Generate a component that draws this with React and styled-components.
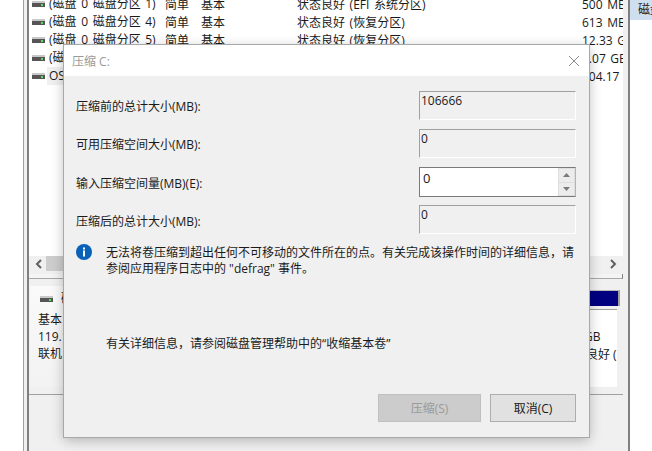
import React from 'react';
import styled, { createGlobalStyle } from 'styled-components';

const GlobalStyle = createGlobalStyle`
  html, body {
    margin: 0;
    height: 100%;
    overflow: hidden;
    background: #fff;
  }
  body {
    font-family: "Open Sans", "Noto Sans CJK SC", sans-serif;
    font-size: 12px;
    color: #1a1a1a;
  }
`;

const Desktop = styled.div`
  position: relative;
  width: 652px;
  height: 451px;
  display: flex;
  overflow: hidden;
  background: #fff;
`;

const Gutter = styled.div`
  width: 23px;
  flex: none;
`;

const Main = styled.div`
  width: 607px;
  flex: none;
  display: flex;
  flex-direction: column;
  box-sizing: border-box;
  background: #f0f0f0;
  border-left: 1px solid #a0a0a0;
  border-right: 2px solid #808080;
  padding-left: 3px;
`;

const Content = styled.div`
  flex: 1;
  display: flex;
  flex-direction: column;
  border-left: 2px solid #808080;
  min-height: 0;
`;

const List = styled.div`
  height: 256px;
  flex: none;
  background: #fff;
  overflow: hidden;
  margin-right: 5px;
`;

const Rows = styled.div`
  margin-top: -5px;
`;

const Row = styled.div`
  height: 18px;
  display: grid;
  grid-template-columns: 116px 36px 96px 285px auto;
  align-items: center;
  padding-left: 20px;
  position: relative;
  white-space: nowrap;
  overflow: hidden;
  word-spacing: 1.5px;
`;

const RowIcon = styled.svg`
  position: absolute;
  left: 3px;
  top: 6px;
`;

const NameCell = styled.span`
  justify-self: start;
  margin-left: -2px;
  padding-left: 2px;
  line-height: 18px;
  background: ${({ $selected }) => ($selected ? '#f0f0f0' : 'transparent')};
  width: ${({ $selected }) => ($selected ? '15px' : 'auto')};
`;

const HScroll = styled.div`
  height: 15px;
  flex: none;
  display: flex;
  align-items: stretch;
  background: #f0f0f0;
  margin-right: 5px;
`;

const ScrollArrow = styled.svg`
  flex: none;
  align-self: center;
  margin: 0 6px;
`;

const ScrollThumb = styled.div`
  width: 60px;
  margin-left: -3px;
  background: #cdcdcd;
`;

const ScrollTrack = styled.div`
  flex: 1;
`;

const Splitter = styled.div`
  height: 8px;
  flex: none;
  box-sizing: border-box;
  margin-right: 5px;
  padding-top: 3px;
  border-bottom: 1px solid #808080;
`;

const SplitterBar = styled.div`
  height: 4px;
  background: #f4f4f4;
  border-bottom: 1px solid #a8a8a8;
  border-right: 1px solid #808080;
`;

const DiskPane = styled.div`
  height: 116px;
  flex: none;
  box-sizing: border-box;
  padding: 7px 3px 7px 1px;
  display: flex;
  border-bottom: 1px solid #a0a0a0;
  margin-right: 5px;
`;

const DiskInfo = styled.div`
  width: 150px;
  flex: none;
  padding: 3px 0 0 8px;
  line-height: 17px;
  background: linear-gradient(#fafafa, #f2f2f2);
`;

const DiskName = styled.div`
  display: flex;
  align-items: center;
  gap: 8px;
  height: 19px;
  margin-bottom: 3px;
  padding-left: 2px;
`;

const DiskLine = styled.div`
  white-space: nowrap;
`;

const Partition = styled.div`
  flex: 1;
  min-width: 0;
  display: flex;
  flex-direction: column;
  padding-top: 4px;
`;

const PartitionHead = styled.div`
  height: 15px;
  flex: none;
  background: #000080;
  border-right: 2px solid #a0a0a0;
  border-top: 1px solid #b8b8b8;
`;

const PartitionBody = styled.div`
  flex: 1;
  min-height: 0;
  background: #fff;
  margin: 3px 3px 0 0;
  padding: 18px 0 0 398px;
  border-top: 1px solid #a0a0a0;
  line-height: 18px;
  white-space: nowrap;
  overflow: hidden;
`;

const PartitionSize = styled.div`
  margin-left: -2px;
`;

const SidePanel = styled.div`
  flex: 1;
  min-width: 0;
  background: #fff;
`;

const SideTab = styled.div`
  height: 20px;
  background: #cfdfef;
  padding-left: 8px;
  line-height: 20px;
  white-space: nowrap;
  overflow: hidden;
`;

const Dialog = styled.div`
  position: absolute;
  left: 64px;
  top: 45px;
  width: 525px;
  height: 392px;
  box-sizing: border-box;
  display: flex;
  flex-direction: column;
  background: #f0f0f0;
  box-shadow: 0 0 0 1px #a8a8a8, 0 3px 12px rgba(0, 0, 0, 0.28);
`;

const TitleBar = styled.div`
  height: 31px;
  flex: none;
  background: #fff;
  display: flex;
  align-items: center;
  justify-content: space-between;
  padding: 0 9px 0 8px;
  color: #9a9a9a;
`;

const DialogBody = styled.div`
  flex: 1;
  display: flex;
  flex-direction: column;
  padding: 15px 13px 15px 12px;
`;

const Fields = styled.div`
  display: grid;
  grid-template-columns: 343px 157px;
  row-gap: 9px;
`;

const Label = styled.div`
  height: 29px;
  line-height: ${({ $low }) => ($low ? '33px' : '31px')};
`;

const ReadOnlyBox = styled.div`
  height: 29px;
  box-sizing: border-box;
  border: 1px solid #a0a0a0;
  border-right-color: #fff;
  border-bottom-color: #fff;
  line-height: 16px;
  padding: 1px 0 0 1px;
`;

const SpinBox = styled.div`
  height: 30px;
  box-sizing: border-box;
  display: flex;
  margin-bottom: -1px;
  background: #fff;
  border: 1px solid #7a7a7a;
  border-right-color: #b4b4b4;
`;

const SpinValue = styled.div`
  flex: 1;
  padding: 1px 0 0 3px;
  font-size: 13px;
`;

const SpinButtons = styled.div`
  width: 17px;
  display: flex;
  flex-direction: column;
  gap: 1px;
  padding: 1px;
  box-sizing: border-box;
  background: #dedede;
`;

const SpinButton = styled.div`
  flex: 1;
  display: flex;
  align-items: center;
  justify-content: center;
  background: #ececec;
`;

const Message = styled.div`
  display: flex;
  gap: 14px;
  margin-top: 10px;
  line-height: 16px;
`;

const InfoIcon = styled.svg`
  flex: none;
`;

const MessageText = styled.div`
  padding-top: 1px;
`;

const HelpText = styled.div`
  margin: 59px 0 0 30px;
  line-height: 16px;
`;

const Actions = styled.div`
  margin-top: auto;
  display: flex;
  justify-content: flex-end;
  gap: 9px;
`;

const Button = styled.div`
  width: ${({ $wide }) => ($wide ? '103px' : '86px')};
  height: 28px;
  box-sizing: border-box;
  display: flex;
  align-items: center;
  justify-content: center;
  background: ${({ $disabled }) => ($disabled ? '#cccccc' : '#e1e1e1')};
  border: 1px solid ${({ $disabled }) => ($disabled ? '#bfbfbf' : '#adadad')};
  color: ${({ $disabled }) => ($disabled ? '#9a9a9a' : '#1a1a1a')};
`;

const DriveGlyph = () => (
  <>
    <rect x="0" y="0" width="13" height="2" fill="#c8c8c8" />
    <rect x="0" y="2" width="13" height="4" fill="#555" />
    <rect x="9" y="3" width="2" height="2" fill="#55e055" />
  </>
);

const rows = [
  ['(磁盘 0 磁盘分区 1)', '简单', '基本', '状态良好 (EFI 系统分区)', '500 MB'],
  ['(磁盘 0 磁盘分区 4)', '简单', '基本', '状态良好 (恢复分区)', '613 MB'],
  ['(磁盘 0 磁盘分区 5)', '简单', '基本', '状态良好 (恢复分区)', '12.33 GB'],
  ['(磁盘 0 磁盘分区 6)', '简单', '基本', '状态良好 (恢复分区)', '1.07 GB'],
  ['OS', '简单', '基本', '状态良好 (启动)', '104.17 GB'],
];

const fields = [
  { label: '压缩前的总计大小(MB):', value: '106666' },
  { label: '可用压缩空间大小(MB):', value: '0' },
  { label: '输入压缩空间量(MB)(E):', value: '0', editable: true, low: true },
  { label: '压缩后的总计大小(MB):', value: '0', low: true },
];

const App = () => (
  <Desktop>
    <GlobalStyle />
    <Gutter />
    <Main>
      <Content>
        <List>
          <Rows>
            {rows.map(([name, ...cells]) => (
              <Row key={name}>
                <RowIcon width="13" height="6" viewBox="0 0 13 6">
                  <DriveGlyph />
                </RowIcon>
                <NameCell $selected={name === 'OS'}>{name}</NameCell>
                {cells.map(cell => (
                  <span key={cell}>{cell}</span>
                ))}
              </Row>
            ))}
          </Rows>
        </List>
        <HScroll>
          <ScrollArrow width="8" height="10" viewBox="0 0 8 10">
            <path d="M6 1L2 5l4 4" fill="none" stroke="#606060" strokeWidth="2" />
          </ScrollArrow>
          <ScrollThumb />
          <ScrollTrack />
          <ScrollArrow width="8" height="10" viewBox="0 0 8 10">
            <path d="M2 1l4 4-4 4" fill="none" stroke="#606060" strokeWidth="2" />
          </ScrollArrow>
        </HScroll>
        <Splitter>
          <SplitterBar />
        </Splitter>
        <DiskPane>
          <DiskInfo>
            <DiskName>
              <svg width="13" height="6" viewBox="0 0 13 6">
                <DriveGlyph />
              </svg>
              <span>磁盘 0</span>
            </DiskName>
            <DiskLine>基本</DiskLine>
            <DiskLine>119.17 GB</DiskLine>
            <DiskLine>联机</DiskLine>
          </DiskInfo>
          <Partition>
            <PartitionHead />
            <PartitionBody>
              <PartitionSize>GB</PartitionSize>
              <div>良好 (恢复分区)</div>
            </PartitionBody>
          </Partition>
        </DiskPane>
      </Content>
    </Main>
    <SidePanel>
      <SideTab>磁盘</SideTab>
    </SidePanel>
    <Dialog>
      <TitleBar>
        <span>压缩 C:</span>
        <svg width="12" height="12" viewBox="0 0 12 12">
          <path d="M1 1l10 10M11 1L1 11" stroke="#8c8c8c" strokeWidth="1" fill="none" />
        </svg>
      </TitleBar>
      <DialogBody>
        <Fields>
          {fields.map(({ label, value, editable, low }) => (
            <React.Fragment key={label}>
              <Label $low={low}>{label}</Label>
              {editable ? (
                <SpinBox>
                  <SpinValue>{value}</SpinValue>
                  <SpinButtons>
                    <SpinButton>
                      <svg width="7" height="4" viewBox="0 0 7 4">
                        <path d="M3.5 0L7 4H0z" fill="#7a7a7a" />
                      </svg>
                    </SpinButton>
                    <SpinButton>
                      <svg width="7" height="4" viewBox="0 0 7 4">
                        <path d="M0 0h7L3.5 4z" fill="#7a7a7a" />
                      </svg>
                    </SpinButton>
                  </SpinButtons>
                </SpinBox>
              ) : (
                <ReadOnlyBox>{value}</ReadOnlyBox>
              )}
            </React.Fragment>
          ))}
        </Fields>
        <Message>
          <InfoIcon width="16" height="16" viewBox="0 0 16 16">
            <circle cx="8" cy="8" r="8" fill="#0a62b8" />
            <rect x="7" y="6.5" width="2" height="6" fill="#fff" />
            <rect x="7" y="3.5" width="2" height="2" fill="#fff" />
          </InfoIcon>
          <MessageText>
            无法将卷压缩到超出任何不可移动的文件所在的点。有关完成该操作时间的详细信息，请参阅应用程序日志中的 "defrag" 事件。
          </MessageText>
        </Message>
        <HelpText>有关详细信息，请参阅磁盘管理帮助中的“收缩基本卷”</HelpText>
        <Actions>
          <Button $wide $disabled>压缩(S)</Button>
          <Button>取消(C)</Button>
        </Actions>
      </DialogBody>
    </Dialog>
  </Desktop>
);

export default App;
